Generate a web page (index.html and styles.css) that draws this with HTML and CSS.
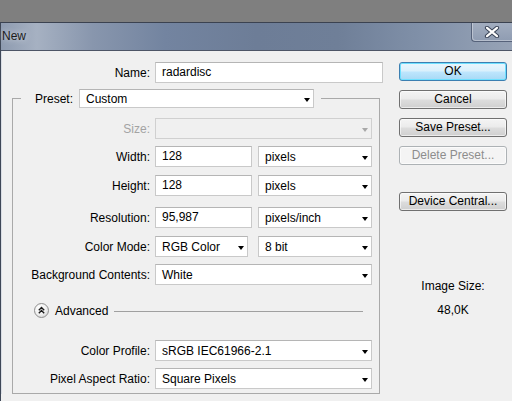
FILE: index.html
```html
<!DOCTYPE html>
<html>
<head>
<meta charset="utf-8">
<link rel="stylesheet" href="styles.css">
</head>
<body>
<div class="desk">
  <div class="window">
    <div class="titlebar">
      <span class="title">New</span>
      <div class="close">
        <svg width="16" height="12" viewBox="0 0 16 12">
          <path d="M3 1.8 L13 10.2 M13 1.8 L3 10.2" stroke="#3b4558" stroke-width="4.2" stroke-linecap="round"/>
          <path d="M3 1.8 L13 10.2 M13 1.8 L3 10.2" stroke="#ffffff" stroke-width="2.2" stroke-linecap="round"/>
        </svg>
      </div>
    </div>
    <div class="client">
      <div class="main">
        <div class="name-row">
          <span class="label">Name:</span>
          <div class="field name-field">radardisc</div>
        </div>
        <fieldset class="group">
          <legend class="legend">
            <span class="legend-label">Preset:</span>
            <div class="select preset"><span>Custom</span><span class="arrow"></span></div>
          </legend>
          <div class="row">
            <span class="label disabled-label">Size:</span>
            <div class="controls">
              <div class="select full disabled"><span></span><span class="arrow grey"></span></div>
            </div>
          </div>
          <div class="row mt7">
            <span class="label">Width:</span>
            <div class="controls">
              <div class="field num">128</div>
              <div class="select unit"><span>pixels</span><span class="arrow"></span></div>
            </div>
          </div>
          <div class="row mt8">
            <span class="label">Height:</span>
            <div class="controls">
              <div class="field num">128</div>
              <div class="select unit"><span>pixels</span><span class="arrow"></span></div>
            </div>
          </div>
          <div class="row mt11">
            <span class="label">Resolution:</span>
            <div class="controls">
              <div class="field num">95,987</div>
              <div class="select unit"><span>pixels/inch</span><span class="arrow"></span></div>
            </div>
          </div>
          <div class="row mt8">
            <span class="label">Color Mode:</span>
            <div class="controls">
              <div class="select mode"><span>RGB Color</span><span class="arrow"></span></div>
              <div class="select unit"><span>8 bit</span><span class="arrow"></span></div>
            </div>
          </div>
          <div class="row mt7">
            <span class="label">Background Contents:</span>
            <div class="controls">
              <div class="select full"><span>White</span><span class="arrow"></span></div>
            </div>
          </div>
          <div class="advanced">
            <svg class="adv-icon" width="15" height="15" viewBox="0 0 15 15">
              <defs>
                <radialGradient id="g" cx="0.4" cy="0.35" r="0.7">
                  <stop offset="0" stop-color="#ffffff"/>
                  <stop offset="0.6" stop-color="#f2f2f2"/>
                  <stop offset="1" stop-color="#d4d4d4"/>
                </radialGradient>
              </defs>
              <circle cx="7.5" cy="7.5" r="7" fill="url(#g)" stroke="#8f8f8f"/>
              <path d="M4.8 7.2 L7.5 4.5 L10.2 7.2 M4.8 10.2 L7.5 7.5 L10.2 10.2" fill="none" stroke="#1a1a1a" stroke-width="1.4"/>
            </svg>
            <span class="adv-text">Advanced</span>
            <span class="adv-line"></span>
          </div>
          <div class="row mt19">
            <span class="label">Color Profile:</span>
            <div class="controls">
              <div class="select full"><span>sRGB IEC61966-2.1</span><span class="arrow"></span></div>
            </div>
          </div>
          <div class="row mt7">
            <span class="label">Pixel Aspect Ratio:</span>
            <div class="controls">
              <div class="select full"><span>Square Pixels</span><span class="arrow"></span></div>
            </div>
          </div>
        </fieldset>
      </div>
      <div class="side">
        <div class="btn default">OK</div>
        <div class="btn">Cancel</div>
        <div class="btn">Save Preset...</div>
        <div class="btn disabled-btn">Delete Preset...</div>
        <div class="btn device">Device Central...</div>
        <div class="size-label">Image Size:</div>
        <div class="size-value">48,0K</div>
      </div>
    </div>
  </div>
</div>
</body>
</html>
```
FILE: styles.css
```css
html, body {
  margin: 0;
  padding: 0;
}
body {
  width: 512px;
  height: 401px;
  overflow: hidden;
  background: #7f7f7f;
  font-family: "Liberation Sans", Arial, sans-serif;
  font-size: 12px;
  color: #000;
}
.desk {
  padding-top: 22px;
}
.window {
  width: 511px;
  border-top: 1px solid #3b4250;
  border-left: 1px solid #3e4757;
  background: #f0f0f0;
  height: 378px;
}
.titlebar {
  height: 27px;
  display: flex;
  align-items: flex-start;
  border-bottom: 1px solid #4d5566;
  background: linear-gradient(90deg, #8e9bb0 0%, #a6b1c2 7%, #8896ad 18%, #7384a0 32%, #6d7d97 50%, #6f7f98 66%, #8090a8 82%, #97a3b6 100%);
}
.title {
  padding-left: 1px;
  line-height: 27px;
  font-size: 12px;
  color: #1c1c1c;
  text-shadow: 0 0 6px rgba(255,255,255,0.7);
}
.close {
  margin-left: auto;
  width: 40px;
  height: 18px;
  border-left: 1px solid #56627a;
  border-bottom: 1px solid #56627a;
  border-bottom-left-radius: 4px;
  box-shadow: inset 1px -1px 0 rgba(255,255,255,0.35);
  background: linear-gradient(180deg, #a2adbf 0%, #8f9cb2 100%);
  display: flex;
  align-items: center;
  justify-content: center;
}
.client {
  display: flex;
  border-left: 1px solid #d9dde4;
}
.main {
  width: 381px;
  padding-top: 11px;
}
.name-row {
  display: flex;
  align-items: center;
  gap: 5px;
}
.name-row .label {
  width: 148px;
}
.label {
  text-align: right;
  white-space: nowrap;
}
.disabled-label {
  color: #a3a3a3;
}
.field {
  box-sizing: border-box;
  height: 21px;
  line-height: 19px;
  border: 1px solid #c9c9c9;
  border-top-color: #b5b5b5;
  background: #fff;
  padding-left: 6px;
  white-space: nowrap;
}
.name-field {
  width: 228px;
}
.group {
  box-sizing: border-box;
  width: 368px;
  margin: 6px 0 0 10px;
  padding: 10px 7px 4px 8px;
  border: 1px solid #a9a9a9;
  min-width: 0;
}
.legend {
  padding: 0 7px 0 14px;
  display: flex;
  align-items: center;
  gap: 6px;
}
.legend-label {
  width: 38px;
}
.select {
  box-sizing: border-box;
  height: 21px;
  border: 1px solid #c9c9c9;
  border-top-color: #b5b5b5;
  background: #fff;
  padding: 0 3px 0 6px;
  display: flex;
  align-items: center;
  justify-content: space-between;
  white-space: nowrap;
}
.preset {
  width: 235px;
  height: 19px;
}
.arrow {
  width: 0;
  height: 0;
  border-left: 3.5px solid transparent;
  border-right: 3.5px solid transparent;
  border-top: 4px solid #000;
  margin-top: 2px;
}
.arrow.grey {
  border-top-color: #a8a8a8;
}
.disabled {
  background: #f0f0f0;
  border-color: #d0d0d0;
}
.row {
  display: flex;
  align-items: center;
  gap: 5px;
  height: 21px;
}
.row .label {
  width: 129px;
}
.controls {
  width: 217px;
  display: flex;
  justify-content: space-between;
}
.full {
  width: 217px;
}
.num {
  width: 97px;
}
.unit {
  width: 114px;
}
.mode {
  width: 93px;
}
.mt7 { margin-top: 7px; }
.mt8 { margin-top: 8px; }
.mt11 { margin-top: 11px; }
.mt19 { margin-top: 19px; }
.advanced {
  margin-top: 15px;
  height: 21px;
  display: flex;
  align-items: center;
}
.adv-icon {
  margin-left: 13px;
  display: block;
}
.adv-text {
  margin-left: 6px;
}
.adv-line {
  flex: 1;
  margin: 1px 9px 0 6px;
  border-top: 1px solid #a0a0a0;
}
.side {
  width: 108px;
  margin-left: 16px;
  padding-top: 11px;
  display: flex;
  flex-direction: column;
}
.btn {
  box-sizing: border-box;
  height: 19px;
  line-height: 17px;
  margin-bottom: 9px;
  text-align: center;
  border: 1px solid #707070;
  border-radius: 3px;
  background: linear-gradient(180deg, #f4f4f4 0%, #ebebeb 48%, #dddddd 52%, #cfcfcf 100%);
  box-shadow: inset 0 0 0 1px rgba(255,255,255,0.6);
}
.default {
  border-color: #3c7fb1;
  background: linear-gradient(180deg, #eaf6fd 0%, #d9f0fc 48%, #bee6fd 52%, #a7d9f5 100%);
  box-shadow: inset 0 0 0 1px #6ee0ff, 0 0 0 0 transparent;
}
.disabled-btn {
  color: #8d8d8d;
  border-color: #adb2b5;
  background: #f4f4f4;
}
.device {
  margin-top: 18px;
}
.size-label {
  margin-top: 59px;
  text-align: center;
  line-height: 14px;
}
.size-value {
  margin-top: 10px;
  text-align: center;
  line-height: 14px;
}
```
